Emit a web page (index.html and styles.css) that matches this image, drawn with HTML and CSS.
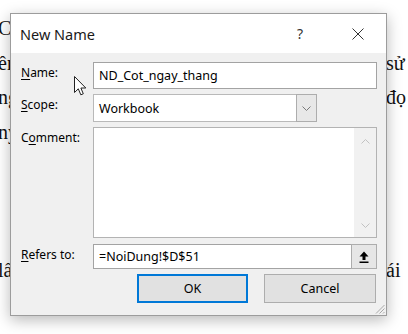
FILE: index.html
```html
<!DOCTYPE html>
<html lang="vi">
<head>
  <meta charset="UTF-8">
  <title>New Name</title>
  <link rel="stylesheet" href="styles.css">
</head>
<body>
  <div class="doc">
    <div class="line"><span class="l">C</span><span class="r"></span></div>
    <div class="line"><span class="l">ên</span><span class="r">sử</span></div>
    <div class="line"><span class="l">ng</span><span class="r">đọ</span></div>
    <div class="line"><span class="l">ny</span><span class="r"></span></div>
    <div class="line"><span class="l"></span><span class="r"></span></div>
    <div class="line"><span class="l"></span><span class="r"></span></div>
    <div class="line"><span class="l"></span><span class="r"></span></div>
    <div class="line"><span class="l">lấ</span><span class="r">ái</span></div>
  </div>

  <div class="dialog">
    <div class="titlebar">
      <span class="title">New Name</span>
      <span class="help">?</span>
      <span class="close">
        <svg width="12" height="12" viewBox="0 0 12 12"><path d="M0.5 0.5 L11.5 11.5 M11.5 0.5 L0.5 11.5" stroke="#333" stroke-width="1" fill="none"/></svg>
      </span>
    </div>

    <div class="form">
      <label class="lbl"><u>N</u>ame:</label>
      <div class="field input">ND_Cot_ngay_thang</div>

      <label class="lbl"><u>S</u>cope:</label>
      <div class="field select">
        <span class="value">Workbook</span>
        <span class="drop">
          <svg width="9" height="5" viewBox="0 0 9 5"><path d="M0.5 0.5 L4.5 4.5 L8.5 0.5" stroke="#7a7a7a" fill="none"/></svg>
        </span>
      </div>

      <label class="lbl">C<u>o</u>mment:</label>
      <div class="field textarea">
        <div class="text"></div>
        <div class="scrollbar">
          <svg width="9" height="5" viewBox="0 0 9 5"><path d="M0.5 4.5 L4.5 0.5 L8.5 4.5" stroke="#c2c2c2" fill="none"/></svg>
          <svg width="9" height="5" viewBox="0 0 9 5"><path d="M0.5 0.5 L4.5 4.5 L8.5 0.5" stroke="#c2c2c2" fill="none"/></svg>
        </div>
      </div>

      <label class="lbl"><u>R</u>efers to:</label>
      <div class="field input refers">
        <span class="value">=NoiDung!$D$51</span>
        <span class="collapse">
          <svg width="10" height="12" viewBox="0 0 10 12"><path d="M5 0.5 L9.5 5.5 L6.5 5.5 L6.5 9 L3.5 9 L3.5 5.5 L0.5 5.5 Z" fill="#000"/><rect x="0.5" y="10.5" width="9" height="1.5" fill="#000"/></svg>
        </span>
      </div>

      <div class="buttons">
        <button class="btn default">OK</button>
        <button class="btn">Cancel</button>
      </div>
    </div>

    <svg class="grip" width="11" height="11" viewBox="0 0 11 11">
      <path d="M10.5 2 L2 10.5 M10.5 5.5 L5.5 10.5 M10.5 9 L9 10.5" stroke="#a8a8a8" stroke-width="1" fill="none"/>
    </svg>
  </div>

  <svg class="cursor" width="13" height="20" viewBox="0 0 13 20">
    <path d="M0.5 0.5 L0.5 16.5 L4.3 12.8 L6.8 18.8 L9.3 17.8 L6.9 12 L11.8 12 Z" fill="#fff" stroke="#222" stroke-width="1" stroke-linejoin="round"/>
  </svg>
</body>
</html>
```

FILE: styles.css
```css
* {
  box-sizing: border-box;
  margin: 0;
  padding: 0;
}

body {
  position: relative;
  width: 408px;
  height: 334px;
  overflow: hidden;
  background-color: #fff;
  font-family: "Noto Sans", "Open Sans", sans-serif;
  color: #000;
}

/* the document behind the dialog */
.doc {
  padding-top: 11px;
  font-family: "Liberation Serif", serif;
  font-size: 20px;
  color: #111;
}

.line {
  display: flex;
  justify-content: space-between;
  height: 34.5px;
  line-height: 34.5px;
}

.line .l {
  margin-left: -2px;
}

.line .r {
  width: 22px;
}

/* dialog */
.dialog {
  position: absolute;
  left: 10px;
  top: 13px;
  width: 377px;
  height: 303px;
  display: flex;
  flex-direction: column;
  background-color: #f0f0f0;
  border: 1px solid #9c9c9c;
  box-shadow: 0 4px 14px rgba(0, 0, 0, 0.28);
}

.titlebar {
  display: flex;
  align-items: center;
  height: 39px;
  padding-left: 9px;
  background-color: #fff;
}

.title {
  flex: 1;
  font-size: 14.5px;
  color: #1a1a1a;
}

.help {
  width: 70px;
  text-align: center;
  font-size: 14px;
  color: #333;
}

.close {
  display: flex;
  align-items: center;
  justify-content: center;
  width: 46px;
  margin-right: 5px;
}

.form {
  display: grid;
  grid-template-columns: 72px 1fr;
  grid-template-rows: 27px 28px 111px 26px 29px;
  row-gap: 5px;
  padding: 9px 9px 0 10px;
}

.lbl {
  padding-top: 3px;
  font-size: 12px;
  line-height: 16px;
}

.lbl u {
  text-underline-offset: 2px;
}

.field {
  display: flex;
  align-items: center;
  background-color: #fff;
  border: 1px solid #a3a3a3;
  font-size: 12.5px;
  padding-left: 5px;
}

.select {
  width: 224px;
  border-color: #b9b9b9;
  padding-right: 0;
}

.select .value,
.refers .value {
  flex: 1;
}

.drop {
  display: flex;
  align-items: center;
  justify-content: center;
  align-self: stretch;
  width: 21px;
  margin: -1px -1px -1px 0;
  background-color: #e8e8e8;
  border: 1px solid #adadad;
}

.textarea {
  align-items: stretch;
  border-color: #b3b3b3;
}

.textarea .text {
  flex: 1;
}

.scrollbar {
  display: flex;
  flex-direction: column;
  justify-content: space-between;
  align-items: center;
  width: 22px;
  padding: 11px 0 9px;
  background-color: #f1f1f1;
}

.refers {
  margin-top: 1px;
}

.refers ~ .lbl,
.lbl:nth-of-type(4) {
  margin-top: 1px;
}

.collapse {
  display: flex;
  align-items: center;
  justify-content: center;
  align-self: stretch;
  width: 26px;
  margin: -1px -1px -1px 0;
  background-color: #e6e6e6;
  border: 1px solid #adadad;
}

.buttons {
  grid-column: 2;
  display: flex;
  justify-content: flex-end;
  gap: 16px;
  padding-right: 1px;
}

.btn {
  width: 112px;
  height: 29px;
  font-family: inherit;
  font-size: 12.5px;
  color: #000;
  background-color: #e1e1e1;
  border: 1px solid #adadad;
}

.btn.default {
  width: 111px;
  border: 2px solid #0078d7;
}

.grip {
  position: absolute;
  right: 1px;
  bottom: 1px;
}

.cursor {
  position: absolute;
  left: 74px;
  top: 76px;
}
```
